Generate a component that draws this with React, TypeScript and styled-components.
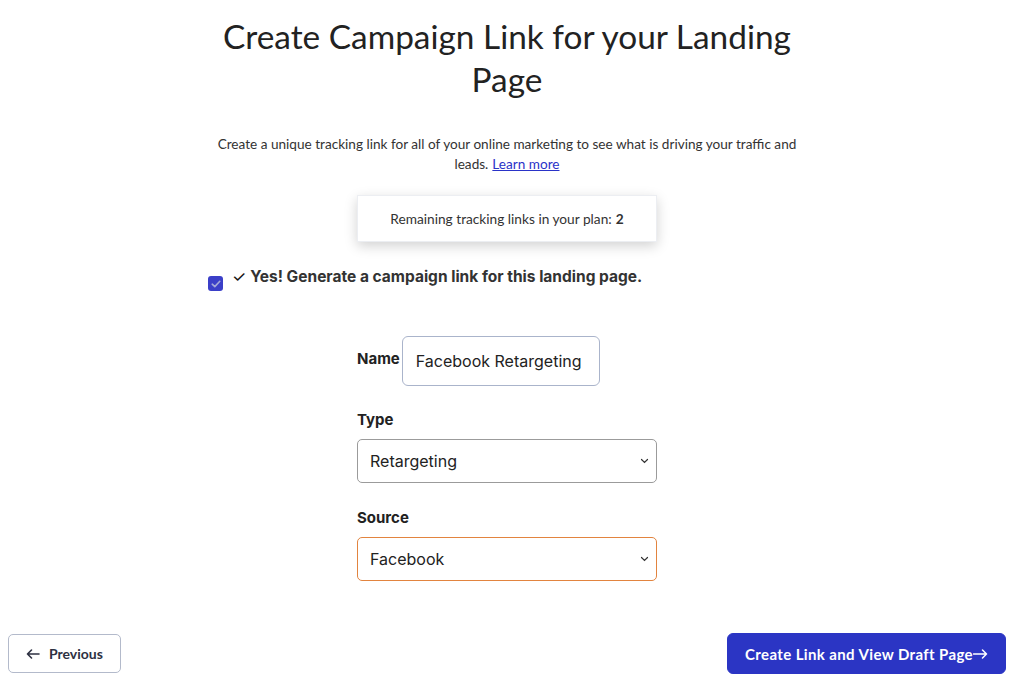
import * as React from "react";
import styled, { createGlobalStyle } from "styled-components";

const Global = createGlobalStyle`
  html, body {
    margin: 0;
    padding: 0;
    background: #ffffff;
  }
  body {
    font-family: Lato, "Liberation Sans", sans-serif;
    color: #222;
  }
`;

const Page = styled.div`
  width: 1014px;
  height: 699px;
  display: flex;
  flex-direction: column;
  align-items: center;
  box-sizing: border-box;
  padding-top: 15px;
`;

const Title = styled.h1`
  width: 620px;
  margin: 0;
  text-align: center;
  font-family: Lato, sans-serif;
  font-weight: 400;
  font-size: 33.4px;
  line-height: 43px;
  color: #222;
`;

const Intro = styled.p`
  width: 600px;
  margin: 33px 0 0;
  text-align: center;
  font-size: 13.6px;
  line-height: 20px;
  color: #333;
`;

const LearnMore = styled.a`
  display: inline-block;
  margin-left: 4px;
  color: #2a33c8;
  text-decoration: underline;
`;

const PlanCard = styled.div`
  margin-top: 21px;
  width: 300px;
  height: 47px;
  box-sizing: border-box;
  border: 1px solid #eceef2;
  box-shadow: 0 4px 12px rgba(0, 0, 0, 0.18);
  display: flex;
  align-items: center;
  justify-content: center;
  font-size: 13.7px;
  color: #333;
  b {
    margin-left: 4px;
  }
`;

const ConsentRow = styled.label`
  align-self: flex-start;
  margin: 24px 0 0 208px;
  display: flex;
  align-items: flex-start;
  gap: 9px;
  font-family: Inter, "Liberation Sans", sans-serif;
`;

const Box = styled.span`
  margin-top: 10px;
  width: 15px;
  height: 15px;
  border-radius: 3px;
  background: #3b3fc8;
  display: flex;
  align-items: center;
  justify-content: center;
`;

const ConsentText = styled.span`
  font-size: 15.5px;
  font-weight: 700;
  color: #333;
  line-height: 20px;
  span {
    font-weight: 400;
    font-size: 16px;
    margin-right: 4px;
    color: #111;
  }
`;

const Form = styled.div`
  margin-top: 45px;
  width: 300px;
  display: flex;
  flex-direction: column;
`;

const NameRow = styled.div`
  display: flex;
  align-items: flex-start;
  gap: 2px;
`;

const Label = styled.label<{ $inline?: boolean }>`
  font-family: Inter, "Liberation Sans", sans-serif;
  font-weight: 700;
  font-size: 15px;
  color: #222;
  line-height: 20px;
  margin: ${(p) => (p.$inline ? "13px 0 0" : "0 0 9px")};
`;

const TextInput = styled.input`
  width: 198px;
  height: 50px;
  box-sizing: border-box;
  border: 1px solid #aab4cb;
  border-radius: 6px;
  padding: 0 13px;
  font-family: Inter, "Liberation Sans", sans-serif;
  font-size: 16px;
  color: #222;
  outline: none;
`;

const Field = styled.div<{ $gap: number }>`
  margin-top: ${(p) => p.$gap}px;
  display: flex;
  flex-direction: column;
`;

const SelectWrap = styled.div`
  position: relative;
  width: 300px;
  height: 44px;
`;

const Select = styled.select<{ $focus?: boolean }>`
  appearance: none;
  width: 100%;
  height: 100%;
  box-sizing: border-box;
  border: 1px solid ${(p) => (p.$focus ? "#e2843f" : "#9b9b9b")};
  border-radius: 5px;
  background: #fff;
  padding: 0 12px;
  font-family: Inter, "Liberation Sans", sans-serif;
  font-size: 16px;
  color: #222;
  outline: none;
`;

const Chevron = styled.svg`
  position: absolute;
  right: 8px;
  top: 19px;
  pointer-events: none;
`;

const Footer = styled.div`
  margin-top: auto;
  margin-bottom: 25px;
  width: 100%;
  box-sizing: border-box;
  padding: 0 8px;
  display: flex;
  justify-content: space-between;
  align-items: center;
`;

const Button = styled.button<{ $primary?: boolean }>`
  height: ${(p) => (p.$primary ? 41 : 39)}px;
  padding: 0 17px;
  border-radius: ${(p) => (p.$primary ? 6 : 5)}px;
  border: 1px solid ${(p) => (p.$primary ? "#2b35c4" : "#b3bacb")};
  background: ${(p) => (p.$primary ? "#2b35c4" : "#fff")};
  color: ${(p) => (p.$primary ? "#fff" : "#2e3142")};
  font-family: Lato, "Liberation Sans", sans-serif;
  font-weight: 700;
  font-size: ${(p) => (p.$primary ? 15 : 14)}px;
  letter-spacing: ${(p) => (p.$primary ? 0.38 : 0)}px;
  display: flex;
  align-items: center;
  gap: ${(p) => (p.$primary ? 0 : 8)}px;
`;

function Arrow(props: { left?: boolean; color: string }) {
  return (
    <svg width="15" height="10" viewBox="0 0 15 10" fill="none">
      {props.left ? (
        <path d="M13 5H1.5M5.5 1L1.5 5l4 4" stroke={props.color} strokeWidth="1.6" strokeLinecap="round" strokeLinejoin="round" />
      ) : (
        <path d="M0.5 5h13M9.5 1l4 4-4 4" stroke={props.color} strokeWidth="1.5" strokeLinecap="round" strokeLinejoin="round" />
      )}
    </svg>
  );
}

function Dropdown(props: { value: string; focus?: boolean }) {
  return (
    <SelectWrap>
      <Select $focus={props.focus} defaultValue={props.value}>
        <option>{props.value}</option>
      </Select>
      <Chevron width="9" height="6" viewBox="0 0 9 6">
        <path d="M1.5 1.5l3 3 3-3" stroke="#333" strokeWidth="1.2" fill="none" strokeLinecap="round" />
      </Chevron>
    </SelectWrap>
  );
}

export default function App() {
  return (
    <Page>
      <Global />
      <Title>Create Campaign Link for your Landing Page</Title>
      <Intro>
        Create a unique tracking link for all of your online marketing to see what is driving your traffic and
        leads.<LearnMore href="#">Learn more</LearnMore>
      </Intro>
      <PlanCard>
        Remaining tracking links in your plan: <b>2</b>
      </PlanCard>
      <ConsentRow>
        <Box>
          <svg width="10" height="8" viewBox="0 0 10 8">
            <path d="M1.2 4.2l2.6 2.4L8.8 1.3" stroke="#a6a9d8" strokeWidth="1.6" fill="none" strokeLinecap="round" strokeLinejoin="round" />
          </svg>
        </Box>
        <ConsentText>
          <span>✓</span>Yes! Generate a campaign link for this landing page.
        </ConsentText>
      </ConsentRow>
      <Form>
        <NameRow>
          <Label $inline>Name</Label>
          <TextInput defaultValue="Facebook Retargeting" />
        </NameRow>
        <Field $gap={24}>
          <Label>Type</Label>
          <Dropdown value="Retargeting" />
        </Field>
        <Field $gap={25}>
          <Label>Source</Label>
          <Dropdown value="Facebook" focus />
        </Field>
      </Form>
      <Footer>
        <Button>
          <Arrow left color="#2e3142" />
          Previous
        </Button>
        <Button $primary>
          Create Link and View Draft Page
          <Arrow color="#fff" />
        </Button>
      </Footer>
    </Page>
  );
}
